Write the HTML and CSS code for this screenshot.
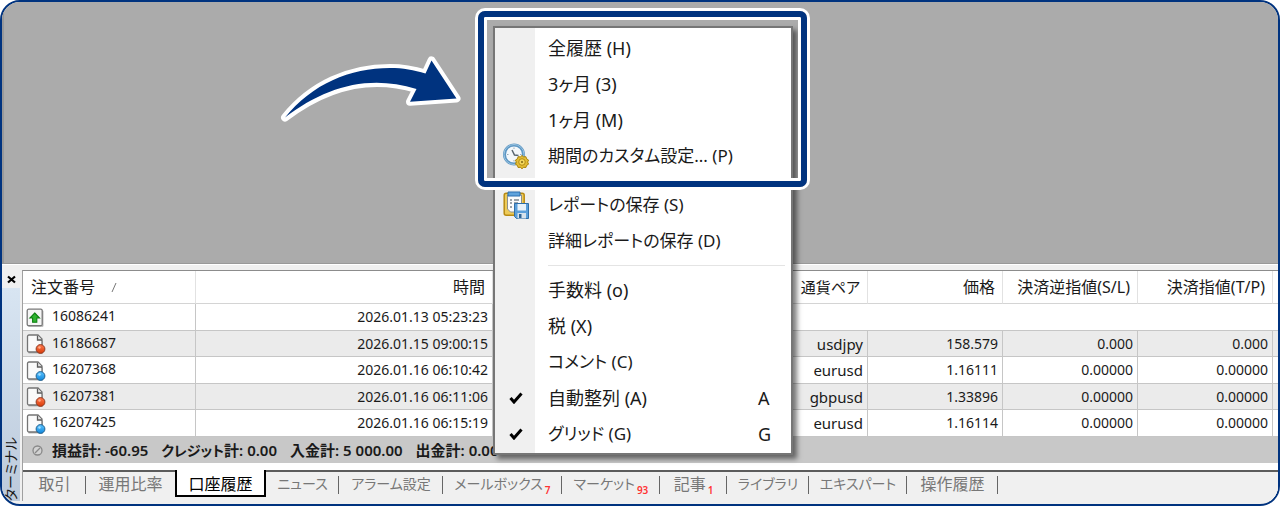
FILE: index.html
```html
<!DOCTYPE html>
<html lang="ja">
<head>
<meta charset="utf-8">
<title>ターミナル</title>
<link rel="stylesheet" href="styles.css">
</head>
<body>
<svg class="defs" width="0" height="0" aria-hidden="true">
  <defs>
    <linearGradient id="gRed" x1="0" y1="0" x2="0" y2="1"><stop offset="0" stop-color="#ff7a4d"/><stop offset="1" stop-color="#d93a08"/></linearGradient>
    <linearGradient id="gBlue" x1="0" y1="0" x2="0" y2="1"><stop offset="0" stop-color="#5cc4ff"/><stop offset="1" stop-color="#0f86dc"/></linearGradient>
    <symbol id="page" viewBox="0 0 20 20">
      <path d="M1.500 1.500h10l4.500 4.500v12.500h-14.500z" fill="#b9b9b9" transform="translate(1 1)"/>
      <path d="M3 1h9l4 4v13H3a1.500 1.500 0 0 1-1.500-1.500v-14A1.500 1.500 0 0 1 3 1z" fill="#fafafa" stroke="#747474" stroke-width="1.300"/>
      <path d="M11.500 1.500v4.500h4.500" fill="#e4e4e4" stroke="#5c5c5c" stroke-width="1.300"/>
    </symbol>
    <symbol id="sell" viewBox="0 0 20 20"><use href="#page"/><circle cx="14.500" cy="15" r="4.400" fill="url(#gRed)" stroke="#8f3a22"/><circle cx="13.500" cy="13.500" r="1.200" fill="#ffad8c"/></symbol>
    <symbol id="buy" viewBox="0 0 20 20"><use href="#page"/><circle cx="14.500" cy="15" r="4.400" fill="url(#gBlue)" stroke="#1f6090"/><circle cx="13.500" cy="13.500" r="1.200" fill="#a5e0ff"/></symbol>
    <symbol id="deposit" viewBox="0 0 20 20">
      <rect x="2" y="2" width="15.500" height="17" rx="1.500" fill="#bbb"/>
      <rect x="1.200" y="1.200" width="15" height="16.500" rx="1.500" fill="#f6f6f6" stroke="#787878" stroke-width="1.300"/>
      <path d="M8.700 5l4.800 5h-2.700v4.200H6.600V10H3.900z" fill="#2fb52f" stroke="#0e7f12" stroke-width="1.100"/>
    </symbol>
    <symbol id="check" viewBox="0 0 14 12"><path d="M1.500 6l3.500 4L12.500 1.500" fill="none" stroke="#000" stroke-width="3"/></symbol>
  </defs>
</svg>

<main class="frame">
  <div class="workspace"></div>

  <section class="terminal">
    <aside class="rail">
      <button class="close" aria-label="閉じる"><svg width="9" height="9" viewBox="0 0 9 9"><path d="M1 1.500l7 6M8 1.500l-7 6" stroke="#000" stroke-width="2.200"/></svg></button>
      <div class="rail-title"><span>ターミナル</span></div>
    </aside>

    <div class="panel">
      <table class="history">
        <colgroup><col class="c-id"><col class="c-time"><col><col class="c-num"><col class="c-num"><col class="c-num"><col class="c-end"></colgroup>
        <thead>
          <tr><th class="left">注文番号<svg class="sort" width="6" height="11" viewBox="0 0 6 11"><path d="M5 1L1 10" stroke="#777"/></svg></th><th>時間</th><th class="kana-head">通貨ペア</th><th>価格</th><th>決済逆指値(S/L)</th><th>決済指値(T/P)</th><th></th></tr>
        </thead>
        <tbody>
          <tr><td class="left"><svg class="ico"><use href="#deposit"/></svg>16086241</td><td>2026.01.13 05:23:23</td><td colspan="5"></td></tr>
          <tr><td class="left"><svg class="ico"><use href="#sell"/></svg>16186687</td><td>2026.01.15 09:00:15</td><td class="pair">usdjpy</td><td>158.579</td><td>0.000</td><td>0.000</td><td></td></tr>
          <tr><td class="left"><svg class="ico"><use href="#buy"/></svg>16207368</td><td>2026.01.16 06:10:42</td><td class="pair">eurusd</td><td>1.16111</td><td>0.00000</td><td>0.00000</td><td></td></tr>
          <tr><td class="left"><svg class="ico"><use href="#sell"/></svg>16207381</td><td>2026.01.16 06:11:06</td><td class="pair">gbpusd</td><td>1.33896</td><td>0.00000</td><td>0.00000</td><td></td></tr>
          <tr><td class="left"><svg class="ico"><use href="#buy"/></svg>16207425</td><td>2026.01.16 06:15:19</td><td class="pair">eurusd</td><td>1.16114</td><td>0.00000</td><td>0.00000</td><td></td></tr>
        </tbody>
      </table>
      <div class="totals">
        <svg width="11" height="11" viewBox="0 0 11 11"><circle cx="5.500" cy="5.500" r="4.500" fill="#d2d2d2" stroke="#888" stroke-width="1.300"/><path d="M3 8l5-5" stroke="#888" stroke-width="1.300"/></svg>
        <div class="sums"><span>損益計: -60.95</span><span><span class="kana">クレジット</span>計: 0.00</span><span>入金計: 5 000.00</span><span>出金計: 0.00</span></div>
      </div>
      <nav class="tabs">
        <button class="tab">取引</button>
        <button class="tab">運用比率</button>
        <button class="tab active">口座履歴</button>
        <button class="tab kana">ニュース</button>
        <button class="tab kana">アラーム設定</button>
        <button class="tab kana">メールボックス<sub>7</sub></button>
        <button class="tab kana">マーケット<sub>93</sub></button>
        <button class="tab">記事<sub>1</sub></button>
        <button class="tab kana">ライブラリ</button>
        <button class="tab kana">エキスパート</button>
        <button class="tab">操作履歴</button>
      </nav>
    </div>
  </section>

  <div class="menu" role="menu">
    <button class="item" role="menuitem"><span class="mark"></span><span class="label">全履歴 (H)</span></button>
    <button class="item" role="menuitem"><span class="mark"></span><span class="label">3ヶ月 (3)</span></button>
    <button class="item" role="menuitem"><span class="mark"></span><span class="label">1ヶ月 (M)</span></button>
    <button class="item long" role="menuitem"><span class="mark"><svg width="28" height="28" viewBox="0 0 28 28">
      <circle cx="12" cy="12.500" r="9.500" fill="#f4f8fb" stroke="#5d97c4" stroke-width="3"/>
      <circle cx="12" cy="12.500" r="10" fill="none" stroke="#9cc4e0" stroke-width="1"/>
      <path d="M12 5.500v1.500M5 12.500h1.500M12 18v1.500M18 12.500h1.500" stroke="#98a9b5"/>
      <path d="M10 8l2.500 5 4 .5" fill="none" stroke="#5b6872" stroke-width="1.500"/>
      <path d="M20 13.500l1.700 1.400 2.200-.2.700 2.100 1.900 1.200-.8 2.100.8 2.100-1.900 1.200-.7 2.100-2.200-.2-1.700 1.400-1.700-1.400-2.200.2-.7-2.100-1.900-1.200.8-2.100-.8-2.100 1.900-1.200.7-2.100 2.200.2z" fill="#e3bd35" stroke="#a98208"/>
      <circle cx="20" cy="20" r="3.300" fill="#f3d75c" stroke="#b58d13"/><circle cx="20" cy="20" r="1" fill="#7d6412"/>
    </svg></span><span class="label">期間のカスタム設定... (P)</span></button>
    <hr>
    <button class="item long" role="menuitem"><span class="mark"><svg width="28" height="30" viewBox="0 0 28 30">
      <rect x="2.200" y="3.200" width="20" height="22" rx="2" fill="#edcb5a" stroke="#b98b12" stroke-width="1.500"/>
      <path d="M5.500 5h14v17h-11l-3-3z" fill="#fbfbfb" stroke="#8b8f92"/>
      <path d="M6 2h12v4H6z" fill="#5fa3dc" stroke="#2c6fae"/>
      <path d="M8 10h2m2 0h5M8 13h2m2 0h4M8 17h2" stroke="#7c8790" stroke-width="1.300"/>
      <path d="M12.500 13.500h14v15H14.500L12.500 26.500z" fill="#5b9fda" stroke="#2f6ea8"/>
      <path d="M15.500 14h8.500v6.500h-8.500z" fill="#e8f2fa"/><path d="M15.500 23h8.500v5.500h-8.500z" fill="#d6e2ec"/><path d="M17 24h2.500v4H17z" fill="#2e6496"/>
    </svg></span><span class="label">レポートの保存 (S)</span></button>
    <button class="item long" role="menuitem"><span class="mark"></span><span class="label">詳細レポートの保存 (D)</span></button>
    <hr class="line">
    <button class="item" role="menuitem"><span class="mark"></span><span class="label">手数料 (o)</span></button>
    <button class="item" role="menuitem"><span class="mark"></span><span class="label">税 (X)</span></button>
    <button class="item long" role="menuitem"><span class="mark"></span><span class="label">コメント (C)</span></button>
    <button class="item" role="menuitemcheckbox" aria-checked="true"><span class="mark"><svg width="14" height="12"><use href="#check"/></svg></span><span class="label">自動整列 (A)</span><span class="key">A</span></button>
    <button class="item long" role="menuitemcheckbox" aria-checked="true"><span class="mark"><svg width="14" height="12"><use href="#check"/></svg></span><span class="label">グリッド (G)</span><span class="key">G</span></button>
  </div>

  <div class="highlight"></div>
  <svg class="arrow" width="190" height="76" viewBox="275 52 190 76" aria-hidden="true">
    <path d="M285 117.500C312 84 350 68 390 68C403 68 414 70 425.500 73.500L431.500 60.500L456.500 98.500L410 101.800L416.500 89C368 74 325 87 285 117.500Z" fill="#00337f" stroke="#fff" stroke-width="8" stroke-linejoin="round" paint-order="stroke"/>
  </svg>
</main>
</body>
</html>
```

FILE: styles.css
```css
* { box-sizing: border-box; }

body {
  margin: 0;
  background: #fff;
  color: #1a1a1a;
  font-family: "Noto Sans", "Noto Sans CJK JP", sans-serif;
  font-feature-settings: "palt";
  font-size: 14px;
}

button {
  margin: 0;
  padding: 0;
  border: 0;
  background: none;
  color: inherit;
  font: inherit;
  font-feature-settings: inherit;
}

.defs { position: absolute; }

.frame {
  position: relative;
  display: flex;
  flex-direction: column;
  min-height: 100vh;
  border: 2px solid #00337f;
  border-radius: 20px;
  background: #f0f0f0;
  overflow: hidden;
}

.workspace {
  flex: 1;
  border-left: 2px solid #999;
  border-bottom: 1px solid #999;
  background: #ababab;
}

.terminal {
  display: flex;
  padding: 5px 0 3px;
  border-top: 1px solid #fff;
}

.rail {
  display: flex;
  flex-direction: column;
  flex: 0 0 20px;
}

.close {
  width: 18px;
  height: 18px;
  line-height: 0;
}

.rail-title {
  flex: 1;
  display: flex;
  align-items: flex-end;
  width: 18px;
  background: linear-gradient(#d8e5f2, #bccadb);
}

.rail-title span {
  writing-mode: vertical-rl;
  text-orientation: sideways;
  transform: rotate(180deg);
  line-height: 18px;
  font-size: 14px;
}

.panel {
  flex: 1;
  min-width: 0;
  border-top: 1px solid #8c8c8c;
  border-left: 1px solid #a0a0a0;
  background: #fff;
}

.history {
  width: 100%;
  table-layout: fixed;
  border-collapse: separate;
  border-spacing: 0;
}

.c-id { width: 173px; }
.c-time { width: 297px; }
.c-num { width: 135px; }
.c-end { width: 5px; }

.history th {
  height: 33px;
  padding: 0 7px 0 0;
  border-right: 1px solid #e2e2e2;
  border-bottom: 1px solid #d4d4d4;
  font-size: 16px;
  font-weight: 400;
  line-height: 20px;
  text-align: right;
  white-space: nowrap;
}

.history th.left {
  padding-left: 8px;
  text-align: left;
}

.history th.kana-head { font-size: 15px; }

.sort { margin-left: 16px; }

.history td {
  height: 27px;
  padding: 0 4px 0 0;
  border-right: 1px solid #c6c6c6;
  border-bottom: 1px solid #c6c6c6;
  line-height: 20px;
  text-align: right;
  white-space: nowrap;
}

.history tbody tr:nth-child(even) td { height: 26px; }

.history td.pair { font-size: 15px; }

.history tr > :last-child {
  padding: 0;
  border-right: 0;
}

.history td.left {
  padding-left: 3px;
  text-align: left;
}

.history tbody tr:nth-child(even) { background: #ebebeb; }

.ico {
  width: 20px;
  height: 20px;
  margin-right: 6px;
  vertical-align: middle;
}

.totals {
  display: flex;
  align-items: center;
  gap: 9px;
  height: 26px;
  padding-left: 9px;
  background: #c8c8c8;
  font-size: 15px;
  font-weight: 600;
  line-height: 20px;
  white-space: nowrap;
}

.sums {
  display: flex;
  gap: 13px;
}

.kana { font-size: 14px; }

.tabs {
  display: grid;
  grid-template-columns: 63px 89px 91px 73px 104px 119px 98px 67px 82px 98px 91px;
  align-items: start;
  height: 31px;
  margin-top: 7px;
  border-top: 2px solid #5c5c5c;
  background: #f0f0f0;
  color: #777;
  font-size: 16px;
  line-height: 24px;
  white-space: nowrap;
}

.tab {
  position: relative;
  display: flex;
  justify-content: center;
}

.tab:not(.active)::after {
  content: "";
  position: absolute;
  right: 0;
  top: 4px;
  width: 1px;
  height: 18px;
  background: #666;
}

.tab:nth-child(2)::after { display: none; }

.tab.active {
  height: 27px;
  margin-top: -2px;
  padding-top: 2px;
  border: 2px solid #000;
  border-top: 0;
  background: #fff;
  color: #000;
}

.tab sub {
  margin-left: 2px;
  color: #f33;
  font-size: 10px;
  font-weight: 600;
  line-height: 12px;
  align-self: flex-end;
}

.menu {
  position: absolute;
  top: 24px;
  left: 491px;
  width: 300px;
  padding: 2px 0 1px;
  border: 2px solid #767676;
  background: linear-gradient(90deg, #f0f0f0 40px, #fff 40px);
  box-shadow: 4px 4px 5px rgba(0, 0, 0, 0.5);
  font-size: 18px;
}

.item {
  display: flex;
  align-items: center;
  width: 100%;
  height: 36px;
  line-height: 24px;
  text-align: left;
  white-space: nowrap;
}

.long .label { font-size: 17px; }

.mark {
  display: flex;
  justify-content: center;
  flex: 0 0 42px;
  margin-right: 11px;
}

.label { flex: 1; }

.key { width: 33px; }

.menu hr {
  height: 1px;
  margin: 6px 6px 6px 53px;
  border: 0;
}

.menu .line { background: #e4e4e4; }

.highlight {
  position: absolute;
  top: 9px;
  left: 476px;
  width: 329px;
  height: 176px;
  border: 6px solid #00337f;
  border-radius: 7px;
  box-shadow: 0 0 0 3px #fff, inset 0 0 0 3px #fff;
}

.arrow {
  position: absolute;
  top: 50px;
  left: 273px;
}
```
